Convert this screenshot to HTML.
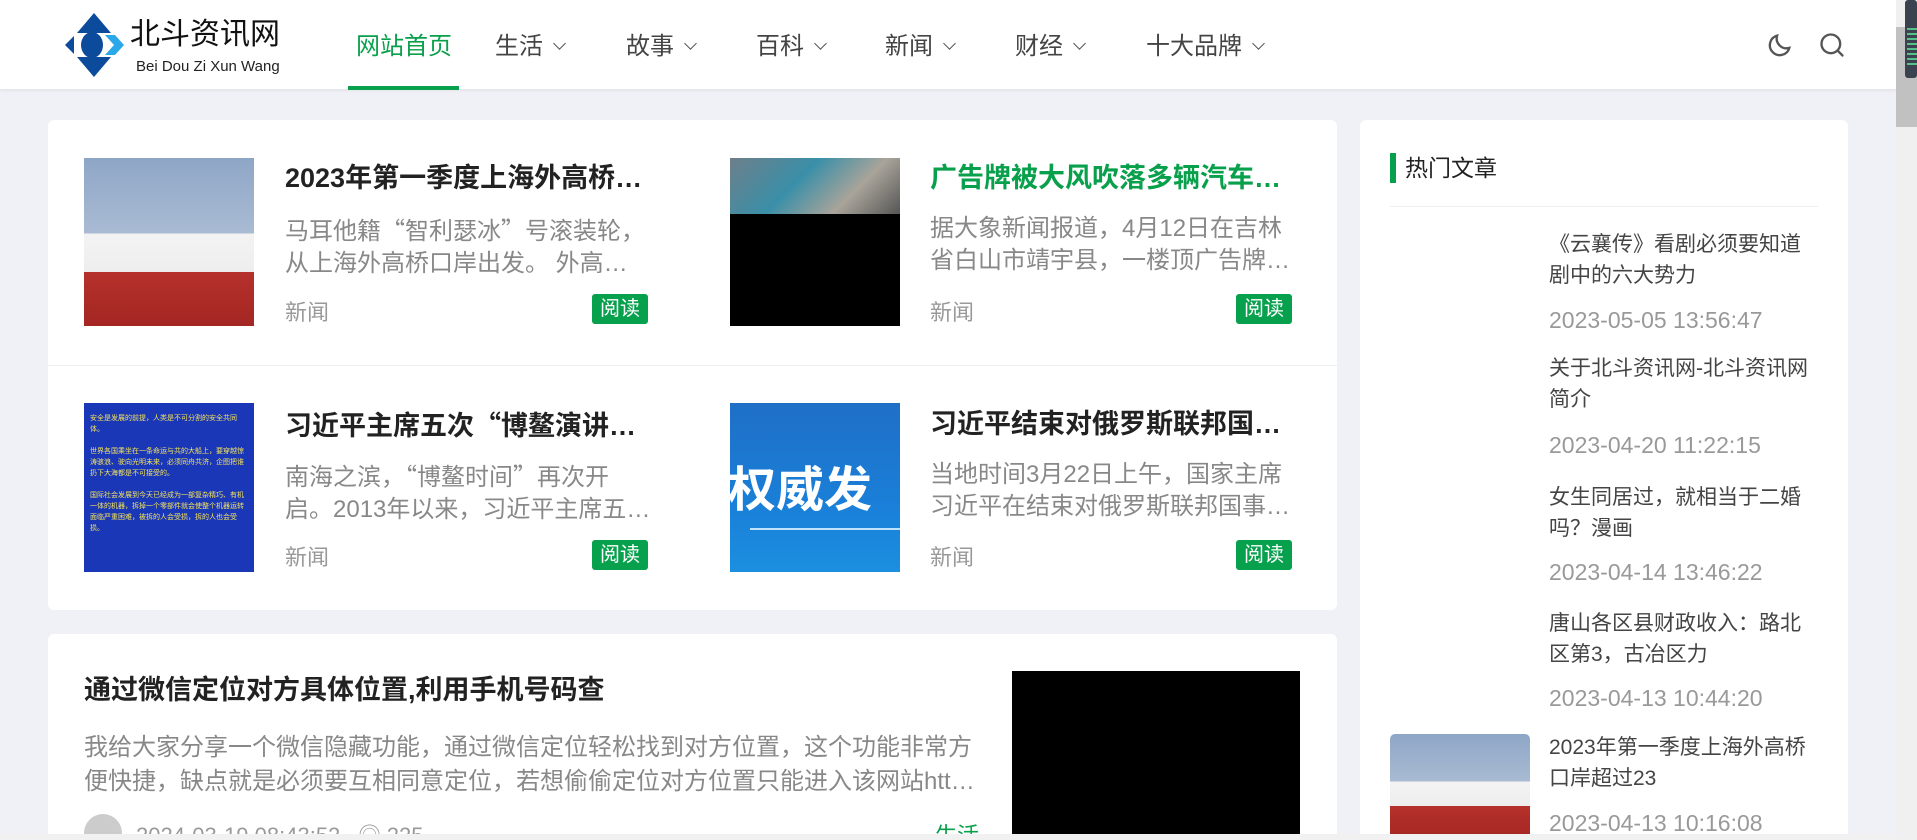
<!DOCTYPE html>
<html><head><meta charset="utf-8">
<style>
*{margin:0;padding:0;box-sizing:border-box}
html{width:1917px;height:840px;overflow:hidden}
body{width:1917px;height:840px;overflow:hidden;background:#f0f1f7;font-family:"Liberation Sans","Noto Sans CJK SC",sans-serif;position:relative}
.abs{position:absolute}
.q{font-family:"Noto Sans CJK SC",sans-serif}
.hdr{left:0;top:0;width:1896px;height:89px;background:#fff;box-shadow:0 1px 4px rgba(0,0,0,.08)}
.nav{top:30px;font-size:24px;color:#444;line-height:34px;white-space:nowrap}
.nav .ch{display:inline-block;width:9px;height:9px;border-right:1.6px solid #555;border-bottom:1.6px solid #555;transform:rotate(45deg);margin-left:12px;position:relative;top:-6px}
.card{background:#fff;border-radius:6px}
.t{font-size:27px;font-weight:bold;color:#222;white-space:nowrap;line-height:34px}
.d{font-size:24px;color:#888;line-height:32px;width:366px;display:-webkit-box;-webkit-line-clamp:2;-webkit-box-orient:vertical;overflow:hidden}
.m{font-size:22px;color:#999}
.b{background:#07a04c;color:#fff;font-size:20px;line-height:30px;width:56px;text-align:center;border-radius:3px}
.sb{font-size:21px;color:#444;line-height:31px;width:270px}
.sd{font-size:23px;color:#999}
.ship{background:
linear-gradient(#8ea6c6 0%,#a9bbd3 45%,transparent 45%),
linear-gradient(transparent 45%,#f3f3f3 45%,#eee 68%,#b5312c 68%,#a42622 100%)}
</style></head><body>

<div class="abs hdr"></div>
<svg class="abs" style="left:63px;top:13px" width="62" height="64" viewBox="0 0 62 64">
<polygon points="31,0 48,20 14,20" fill="#0c4b9c"/>
<polygon points="31,64 48,44 14,44" fill="#0c4b9c"/>
<polygon points="11,23 2,32 11,41" fill="#0c4b9c"/>
<ellipse cx="29" cy="32" rx="11" ry="13" fill="#0c4b9c"/>
<polygon points="42,22 52,22 61,32 52,42 42,42 51,32" fill="#2aa8ea"/>
</svg>
<div class="abs" style="left:130px;top:16px;font-size:30px;color:#111;line-height:38px">北斗资讯网</div>
<div class="abs" style="left:136px;top:58px;font-size:15px;color:#222;line-height:18px">Bei Dou Zi Xun Wang</div>

<div class="abs nav" style="left:356px;color:#09a04c">网站首页</div>
<div class="abs" style="left:348px;top:86px;width:111px;height:4px;background:#07a04c"></div>
<div class="abs nav" style="left:495px">生活<span class="ch"></span></div>
<div class="abs nav" style="left:626px">故事<span class="ch"></span></div>
<div class="abs nav" style="left:756px">百科<span class="ch"></span></div>
<div class="abs nav" style="left:885px">新闻<span class="ch"></span></div>
<div class="abs nav" style="left:1015px">财经<span class="ch"></span></div>
<div class="abs nav" style="left:1146px">十大品牌<span class="ch"></span></div>

<svg class="abs" style="left:1766px;top:31px" width="28" height="28" viewBox="0 0 24 24" fill="none" stroke="#555" stroke-width="2" stroke-linecap="round"><path d="M20 14.5A8.5 8.5 0 0 1 9.5 4a8.5 8.5 0 1 0 10.5 10.5z"/></svg>
<svg class="abs" style="left:1818px;top:31px" width="28" height="28" viewBox="0 0 24 24" fill="none" stroke="#555" stroke-width="2" stroke-linecap="round"><circle cx="11" cy="11" r="8"/><path d="M17 17l4 4"/></svg>

<div class="abs" style="left:1896px;top:0;width:21px;height:840px;background:#f0f0f0"></div>
<div class="abs" style="left:1896px;top:27px;width:21px;height:100px;background:#c1c1c1"></div>
<div class="abs" style="left:1905px;top:0;width:12px;height:78px;background:#3a4250;border-radius:3px"></div>
<div class="abs" style="left:1907px;top:28px;width:10px;height:40px;background:repeating-linear-gradient(#5ac08a 0 2px,transparent 2px 5px)"></div>

<div class="abs card" style="left:48px;top:120px;width:1289px;height:490px"></div>
<div class="abs" style="left:48px;top:365px;width:1289px;height:1px;background:#eee"></div>

<div class="abs ship" style="left:84px;top:158px;width:170px;height:168px"></div>
<div class="abs t" style="left:285px;top:161px">2023年第一季度上海外高桥…</div>
<div class="abs d" style="left:285px;top:213px">马耳他籍<span class="q">“</span>智利瑟冰<span class="q">”</span>号滚装轮，从上海外高桥口岸出发。 外高桥口岸汽车出口数量同比大幅增长</div>
<div class="abs m" style="left:285px;top:295px">新闻</div>
<div class="abs b" style="left:592px;top:294px">阅读</div>

<div class="abs" style="left:730px;top:158px;width:170px;height:168px;background:#000"></div>
<div class="abs" style="left:730px;top:158px;width:170px;height:56px;background:linear-gradient(135deg,#6e7f8a,#3a8fa8 40%,#a9a49a 70%,#555)"></div>
<div class="abs t" style="left:930px;top:161px;color:#09a04c">广告牌被大风吹落多辆汽车…</div>
<div class="abs d" style="left:930px;top:213px">据大象新闻报道，4月12日在吉林省白山市靖宇县，一楼顶广告牌被大风吹落</div>
<div class="abs m" style="left:930px;top:295px">新闻</div>
<div class="abs b" style="left:1236px;top:294px">阅读</div>

<div class="abs" style="left:84px;top:403px;width:170px;height:169px;background:#1a37b8;padding:10px 6px;font-size:7px;line-height:11px;color:#f5e35a;overflow:hidden">安全是发展的前提，人类是不可分割的安全共同体。<br><br>世界各国乘坐在一条命运与共的大船上，要穿越惊涛骇浪、驶向光明未来，必须同舟共济，企图把谁扔下大海都是不可接受的。<br><br>国际社会发展到今天已经成为一部复杂精巧、有机一体的机器，拆掉一个零部件就会使整个机器运转面临严重困难，被拆的人会受损，拆的人也会受损。</div>
<div class="abs t" style="left:285px;top:407px">习近平主席五次<span class="q">“</span>博鳌演讲…</div>
<div class="abs d" style="left:285px;top:459px">南海之滨，<span class="q">“</span>博鳌时间<span class="q">”</span>再次开启。2013年以来，习近平主席五次出席博鳌亚洲论坛</div>
<div class="abs m" style="left:285px;top:540px">新闻</div>
<div class="abs b" style="left:592px;top:540px">阅读</div>

<div class="abs" style="left:730px;top:403px;width:170px;height:169px;background:linear-gradient(#1f6fc6,#1a7fd8 60%,#1b8fe0);overflow:hidden"><div style="position:absolute;left:-2px;top:60px;font-size:48px;font-weight:bold;color:#fff;white-space:nowrap;line-height:56px">权威发</div><div style="position:absolute;left:20px;top:125px;width:150px;height:2px;background:#bfe3ff"></div></div>
<div class="abs t" style="left:930px;top:407px">习近平结束对俄罗斯联邦国…</div>
<div class="abs d" style="left:930px;top:459px">当地时间3月22日上午，国家主席习近平在结束对俄罗斯联邦国事访问后</div>
<div class="abs m" style="left:930px;top:540px">新闻</div>
<div class="abs b" style="left:1236px;top:540px">阅读</div>

<div class="abs card" style="left:48px;top:634px;width:1289px;height:206px"></div>
<div class="abs t" style="left:84px;top:673px;font-size:27px">通过微信定位对方具体位置,利用手机号码查</div>
<div class="abs d" style="left:84px;top:731px;width:900px;line-height:34px;font-size:24px">我给大家分享一个微信隐藏功能，通过微信定位轻松找到对方位置，这个功能非常方便快捷，缺点就是必须要互相同意定位，若想偷偷定位对方位置只能进入该网站https查看</div>
<div class="abs" style="left:1012px;top:671px;width:288px;height:169px;background:#000"></div>
<div class="abs" style="left:84px;top:814px;width:38px;height:26px;border-radius:19px 19px 0 0;background:#ccc"></div>
<div class="abs m" style="left:136px;top:818px;font-size:22px">2024-03-19 08:43:52 &nbsp; ◎ 225</div>
<div class="abs m" style="left:935px;top:818px;color:#09a04c">生活</div>

<div class="abs card" style="left:1360px;top:120px;width:488px;height:720px;border-radius:6px 6px 0 0"></div>
<div class="abs" style="left:1390px;top:153px;width:6px;height:30px;background:#07a04c"></div>
<div class="abs" style="left:1405px;top:152px;font-size:23px;color:#222;line-height:32px">热门文章</div>
<div class="abs" style="left:1390px;top:206px;width:428px;height:1px;background:#eee"></div>

<div class="abs sb" style="left:1549px;top:229px">《云襄传》看剧必须要知道剧中的六大势力</div>
<div class="abs sd" style="left:1549px;top:307px">2023-05-05 13:56:47</div>
<div class="abs sb" style="left:1549px;top:353px">关于北斗资讯网-北斗资讯网简介</div>
<div class="abs sd" style="left:1549px;top:432px">2023-04-20 11:22:15</div>
<div class="abs sb" style="left:1549px;top:482px">女生同居过，就相当于二婚吗？漫画</div>
<div class="abs sd" style="left:1549px;top:559px">2023-04-14 13:46:22</div>
<div class="abs sb" style="left:1549px;top:608px">唐山各区县财政收入：路北区第3，古冶区力</div>
<div class="abs sd" style="left:1549px;top:685px">2023-04-13 10:44:20</div>
<div class="abs ship" style="left:1390px;top:734px;width:140px;height:106px;border-radius:5px 5px 0 0"></div>
<div class="abs sb" style="left:1549px;top:732px">2023年第一季度上海外高桥口岸超过23</div>
<div class="abs sd" style="left:1549px;top:810px">2023-04-13 10:16:08</div>

<div class="abs" style="left:0;top:834px;width:1896px;height:6px;background:#f1f1f1"></div>
</body></html>
